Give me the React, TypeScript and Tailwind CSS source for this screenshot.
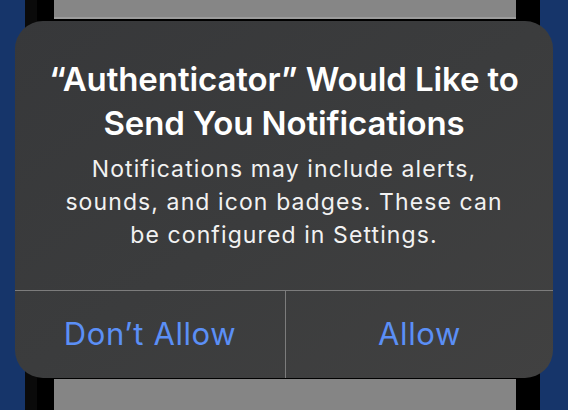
export default function App() {
  return (
    <div className="relative w-[568px] h-[410px] overflow-hidden bg-[#16356a] font-['Inter','Noto_Sans',sans-serif]">
      {/* phone behind the alert */}
      <div className="ml-[25px] w-[515px] h-full bg-black flex">
        <div className="w-[12px] h-full bg-[#0a0a0a]" />
        <div className="ml-[17px] w-[462px] h-full flex flex-col">
          <div className="h-[17px] bg-[#868686]" />
          <div className="h-[2px] bg-[#9c9c9c]" />
          <div className="flex-1" />
          <div className="h-[31px] bg-[#858585]" />
        </div>
      </div>

      {/* alert */}
      <div className="absolute left-[15px] top-[21px] w-[538px] h-[357px] rounded-[28px] overflow-hidden bg-gradient-to-br from-[#37383a] via-[#3b3c3d] to-[#414141] flex flex-col">
        <div className="h-[269px] pt-[36px] px-2 text-center">
          <h1 className="text-[33px] leading-[44px] font-semibold text-white tracking-[-0.1px]">
            “Authenticator” Would Like to
            <br />
            Send You Notifications
          </h1>
          <p className="mt-[8px] text-[23px] leading-[33px] text-[#f2f2f2] tracking-[1.1px]">
            Notifications may include alerts,
            <br />
            sounds, and icon badges. These can
            <br />
            be configured in Settings.
          </p>
        </div>
        <div className="flex-1 flex border-t border-[#7c7c7c]">
          <div className="w-[271px] flex items-center justify-center border-r border-[#7c7c7c] text-[31px] tracking-[0.6px] text-[#5b8ff6]">
            Don’t Allow
          </div>
          <div className="flex-1 flex items-center justify-center text-[31px] tracking-[0.6px] text-[#5b8ff6]">
            Allow
          </div>
        </div>
      </div>
    </div>
  )
}
